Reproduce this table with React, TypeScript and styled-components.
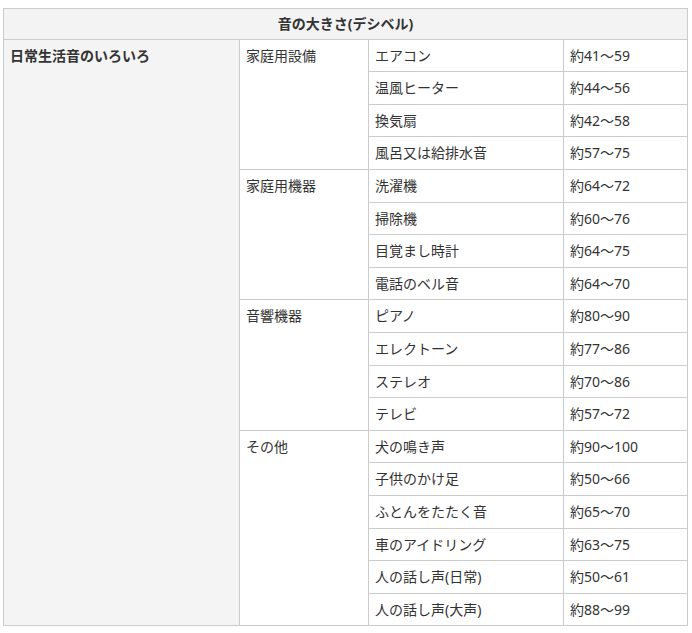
import React from "react";
import styled, { createGlobalStyle } from "styled-components";

const Global = createGlobalStyle`
  html, body { margin: 0; padding: 0; background: #ffffff; }
  body {
    font-family: "Noto Sans", "Noto Sans CJK JP", sans-serif;
    color: #333333;
  }
`;

const Page = styled.div`
  padding: 8px 5px 0 3px;
`;

const Table = styled.table`
  width: 684px;
  border-collapse: collapse;
  table-layout: fixed;
  font-size: 14px;
  line-height: 21.6px;
`;

const Col = styled.col<{ $w: number }>`
  width: ${(p) => p.$w}px;
`;

const HeadCell = styled.th`
  background: #f3f3f3;
  border: 1px solid #cccccc;
  padding: 4px 6px;
  font-weight: bold;
  text-align: center;
  color: #333333;
`;

const CategoryCell = styled.th`
  background: #f4f4f4;
  border: 1px solid #cccccc;
  padding: 5px 6px;
  font-weight: bold;
  text-align: left;
  vertical-align: top;
  color: #333333;
`;

const Cell = styled.td<{ $top?: boolean }>`
  border: 1px solid #cccccc;
  padding: 5px 6px;
  text-align: left;
  vertical-align: ${(p) => (p.$top ? "top" : "middle")};
  white-space: nowrap;
`;

type Group = { name: string; items: [string, string][] };

const groups: Group[] = [
  {
    name: "家庭用設備",
    items: [
      ["エアコン", "約41〜59"],
      ["温風ヒーター", "約44〜56"],
      ["換気扇", "約42〜58"],
      ["風呂又は給排水音", "約57〜75"],
    ],
  },
  {
    name: "家庭用機器",
    items: [
      ["洗濯機", "約64〜72"],
      ["掃除機", "約60〜76"],
      ["目覚まし時計", "約64〜75"],
      ["電話のベル音", "約64〜70"],
    ],
  },
  {
    name: "音響機器",
    items: [
      ["ピアノ", "約80〜90"],
      ["エレクトーン", "約77〜86"],
      ["ステレオ", "約70〜86"],
      ["テレビ", "約57〜72"],
    ],
  },
  {
    name: "その他",
    items: [
      ["犬の鳴き声", "約90〜100"],
      ["子供のかけ足", "約50〜66"],
      ["ふとんをたたく音", "約65〜70"],
      ["車のアイドリング", "約63〜75"],
      ["人の話し声(日常)", "約50〜61"],
      ["人の話し声(大声)", "約88〜99"],
    ],
  },
];

const total = groups.reduce((n, g) => n + g.items.length, 0);

export default function App() {
  return (
    <Page>
      <Global />
      <Table>
        <colgroup>
          <Col $w={236} />
          <Col $w={129} />
          <Col $w={195} />
          <Col $w={124} />
        </colgroup>
        <thead>
          <tr>
            <HeadCell colSpan={4}>音の大きさ(デシベル)</HeadCell>
          </tr>
        </thead>
        <tbody>
          {groups.map((g, gi) =>
            g.items.map(([label, value], ii) => (
              <tr key={`${gi}-${ii}`}>
                {gi === 0 && ii === 0 && (
                  <CategoryCell rowSpan={total}>日常生活音のいろいろ</CategoryCell>
                )}
                {ii === 0 && (
                  <Cell $top rowSpan={g.items.length}>
                    {g.name}
                  </Cell>
                )}
                <Cell>{label}</Cell>
                <Cell>{value}</Cell>
              </tr>
            ))
          )}
        </tbody>
      </Table>
    </Page>
  );
}
